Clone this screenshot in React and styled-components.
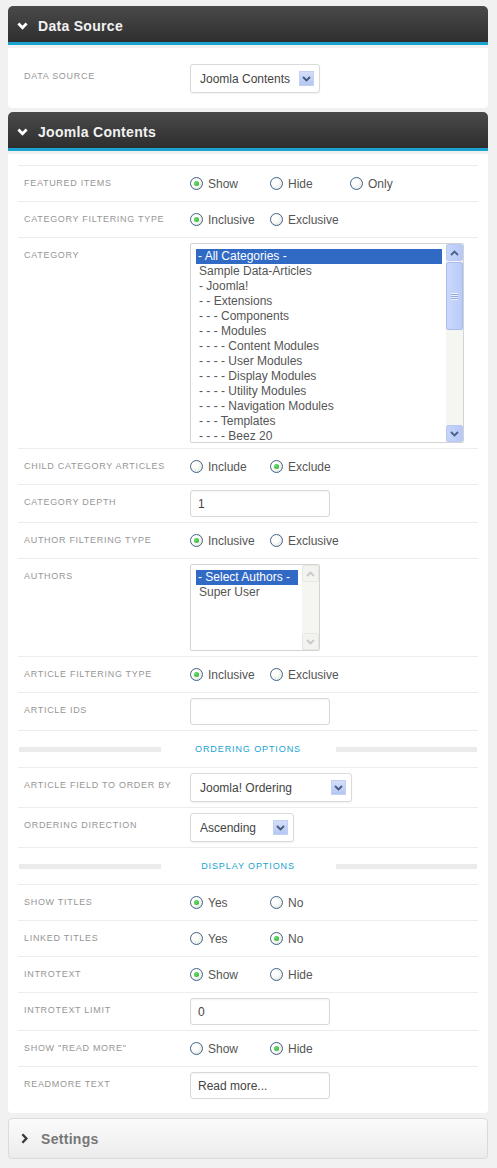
import React from 'react';
import styled, { createGlobalStyle } from 'styled-components';

const GlobalStyle = createGlobalStyle`
  body {
    margin: 0;
    background: #f1f1f1;
    font-family: "Liberation Sans", Arial, sans-serif;
  }
`;

const categories = [
    '- All Categories -',
    'Sample Data-Articles',
    '- Joomla!',
    '- - Extensions',
    '- - - Components',
    '- - - Modules',
    '- - - - Content Modules',
    '- - - - User Modules',
    '- - - - Display Modules',
    '- - - - Utility Modules',
    '- - - - Navigation Modules',
    '- - - Templates',
    '- - - - Beez 20',
];

const ChevronDown = ({ color = '#fff' }) => (
    <svg width="11" height="8" viewBox="0 0 11 8">
        <path d="M1.4 1.6 L5.5 5.8 L9.6 1.6" fill="none" stroke={color} strokeWidth="2.8" />
    </svg>
);

const ChevronRight = () => (
    <svg width="7" height="11" viewBox="0 0 7 11">
        <path d="M1.4 1.2 L5.4 5.5 L1.4 9.8" fill="none" stroke="#3a3a3a" strokeWidth="2.4" />
    </svg>
);

const SmallArrow = ({ up, color }) => (
    <svg width="9" height="6" viewBox="0 0 9 6">
        <path d={up ? 'M1 5 L4.5 1.5 L8 5' : 'M1 1 L4.5 4.5 L8 1'} fill="none" stroke={color} strokeWidth="1.8" />
    </svg>
);

const Radio = ({ checked, label }) => (
    <RadioItem>
        <RadioDot $checked={checked} />
        {label}
    </RadioItem>
);

const Select = ({ value, width }) => (
    <SelectBox $width={width}>
        <span>{value}</span>
        <SelectArrow><SmallArrow color="#44577d" /></SelectArrow>
    </SelectBox>
);

const ListBox = ({ items, width, height, disabled }) => (
    <List $width={width} $height={height}>
        <Options>
            {items.map((item, i) => (
                <Option key={item} $selected={i === 0}>{item}</Option>
            ))}
        </Options>
        <Scrollbar>
            <ScrollButton $disabled={disabled}><SmallArrow up color={disabled ? '#c9c9c9' : '#4d6185'} /></ScrollButton>
            <Track>
                {!disabled && (
                    <Thumb>
                        <Grip />
                    </Thumb>
                )}
            </Track>
            <ScrollButton $disabled={disabled}><SmallArrow color={disabled ? '#c9c9c9' : '#4d6185'} /></ScrollButton>
        </Scrollbar>
    </List>
);

const Field = ({ label, children }) => (
    <Row>
        <Label>{label}</Label>
        <Control>{children}</Control>
    </Row>
);

const Section = ({ title }) => (
    <SectionRow>
        <Bar />
        <SectionTitle>{title}</SectionTitle>
        <Bar />
    </SectionRow>
);

const App = () => {
    return <Page>
        <GlobalStyle />
        <Panel>
            <Header>
                <ChevronDown />
                Data Source
            </Header>
            <Body $bottom={10}>
                <Row $plain>
                    <Label>Data Source</Label>
                    <Control><Select value="Joomla Contents" width={130} /></Control>
                </Row>
            </Body>
        </Panel>

        <Panel>
            <Header>
                <ChevronDown />
                Joomla Contents
            </Header>
            <Body $bottom={9}>
                <Field label="Featured Items">
                    <Radio checked label="Show" />
                    <Radio label="Hide" />
                    <Radio label="Only" />
                </Field>
                <Field label="Category Filtering Type">
                    <Radio checked label="Inclusive" />
                    <Radio label="Exclusive" />
                </Field>
                <Field label="Category">
                    <ListBox items={categories} width={274} height={200} />
                </Field>
                <Field label="Child Category Articles">
                    <Radio label="Include" />
                    <Radio checked label="Exclude" />
                </Field>
                <Field label="Category Depth">
                    <TextInput>1</TextInput>
                </Field>
                <Field label="Author Filtering Type">
                    <Radio checked label="Inclusive" />
                    <Radio label="Exclusive" />
                </Field>
                <Field label="Authors">
                    <ListBox items={['- Select Authors -', 'Super User']} width={130} height={87} disabled />
                </Field>
                <Field label="Article Filtering Type">
                    <Radio checked label="Inclusive" />
                    <Radio label="Exclusive" />
                </Field>
                <Field label="Article IDs">
                    <TextInput />
                </Field>

                <Section title="Ordering Options" />

                <Field label="Article Field to Order By">
                    <Select value="Joomla! Ordering" width={162} />
                </Field>
                <Field label="Ordering Direction">
                    <Select value="Ascending" width={104} />
                </Field>

                <Section title="Display Options" />

                <Field label="Show Titles">
                    <Radio checked label="Yes" />
                    <Radio label="No" />
                </Field>
                <Field label="Linked Titles">
                    <Radio label="Yes" />
                    <Radio checked label="No" />
                </Field>
                <Field label="Introtext">
                    <Radio checked label="Show" />
                    <Radio label="Hide" />
                </Field>
                <Field label="Introtext Limit">
                    <TextInput>0</TextInput>
                </Field>
                <Field label={'Show "Read More"'}>
                    <Radio label="Show" />
                    <Radio checked label="Hide" />
                </Field>
                <Field label="Readmore Text">
                    <TextInput>Read more...</TextInput>
                </Field>
            </Body>
        </Panel>

        <SettingsHeader>
            <ChevronRight />
            Settings
        </SettingsHeader>
    </Page>
}

export default App;

const Page = styled.div`
    padding: 6px 9px 0 8px;
`;

const Panel = styled.div`
    margin-bottom: 4px;

    & + & {
        margin-bottom: 5px;
    }
`;

const Header = styled.div`
    height: 36px;
    box-sizing: border-box;
    display: flex;
    align-items: center;
    gap: 10px;
    padding: 3px 0 0 9px;
    border-radius: 5px 5px 0 0;
    border-bottom: 3px solid #18a3d1;
    background: linear-gradient(#4a4a4a, #2e2e2e);
    color: #f2f2f2;
    font-size: 14px;
    font-weight: 700;
    letter-spacing: 0.3px;
    height: 39px;

    svg {
        margin-top: 1px;
    }
`;

const Body = styled.div`
    margin-top: 3px;
    padding: 11px 10px ${p => p.$bottom}px;
    background: #fff;
    border-radius: 0 0 4px 4px;
`;

const Row = styled.div`
    display: flex;
    align-items: flex-start;
    padding: 5px 6px;
    border-top: ${p => p.$plain ? 'none' : '1px solid #ededed'};
`;

const Label = styled.div`
    width: 166px;
    flex: none;
    font-size: 9px;
    line-height: 25px;
    letter-spacing: 0.7px;
    text-transform: uppercase;
    color: #969696;
`;

const Control = styled.div`
    flex: 1;
    min-height: 25px;
    display: flex;
    align-items: center;
`;

const RadioItem = styled.label`
    min-width: 80px;
    display: inline-flex;
    align-items: center;
    gap: 5px;
    font-size: 12px;
    color: #555;
`;

const RadioDot = styled.span`
    position: relative;
    width: 11px;
    height: 11px;
    border-radius: 50%;
    border: 1px solid #3f6385;
    background: radial-gradient(circle at 35% 35%, #fff 30%, #dcdcd6 100%);

    &::after {
        content: '';
        display: ${p => p.$checked ? 'block' : 'none'};
        position: absolute;
        left: 3px;
        top: 3px;
        width: 5px;
        height: 5px;
        border-radius: 50%;
        background: radial-gradient(circle at 40% 40%, #6fe06f, #1fa51f);
    }
`;

const SelectBox = styled.div`
    box-sizing: border-box;
    width: ${p => p.$width}px;
    height: 29px;
    display: flex;
    align-items: center;
    justify-content: space-between;
    padding: 0 5px 0 9px;
    background: #fff;
    border: 1px solid #dadada;
    border-radius: 3px;
    box-shadow: 0 1px 2px rgba(0, 0, 0, 0.06);
    font-size: 12px;
    color: #444;
`;

const SelectArrow = styled.span`
    width: 15px;
    height: 15px;
    display: flex;
    align-items: center;
    justify-content: center;
    background: linear-gradient(#d3def9, #b4c7f3);
    border: 1px solid #c2d1f2;
    box-sizing: border-box;
`;

const TextInput = styled.div`
    box-sizing: border-box;
    width: 140px;
    height: 27px;
    padding: 0 7px;
    display: flex;
    align-items: center;
    background: #fff;
    border: 1px solid #d8d8d8;
    border-radius: 3px;
    box-shadow: inset 0 1px 2px rgba(0, 0, 0, 0.05);
    font-size: 12px;
    color: #444;
`;

const List = styled.div`
    box-sizing: border-box;
    width: ${p => p.$width}px;
    height: ${p => p.$height}px;
    display: flex;
    border: 1px solid #d3d3d3;
    border-radius: 2px;
    background: #fff;
    overflow: hidden;
`;

const Options = styled.div`
    flex: 1;
    padding: 5px 4px 0 5px;
    overflow: hidden;
`;

const Option = styled.div`
    height: 15px;
    line-height: 15px;
    padding-left: ${p => p.$selected ? '2px' : '3px'};
    font-size: 12px;
    white-space: nowrap;
    background: ${p => p.$selected ? '#316ac5' : 'transparent'};
    color: ${p => p.$selected ? '#fff' : '#555'};
`;

const Scrollbar = styled.div`
    width: 17px;
    flex: none;
    display: flex;
    flex-direction: column;
    background: #f5f5f1;
`;

const ScrollButton = styled.div`
    height: 17px;
    flex: none;
    box-sizing: border-box;
    display: flex;
    align-items: center;
    justify-content: center;
    border: 1px solid ${p => p.$disabled ? '#e6e6e3' : '#b9c9f0'};
    border-radius: 2px;
    background: ${p => p.$disabled ? '#f3f3ef' : 'linear-gradient(90deg, #c6d4fb, #b7c9f7)'};
`;

const Track = styled.div`
    flex: 1;
    padding: 1px 0;
`;

const Thumb = styled.div`
    height: 68px;
    box-sizing: border-box;
    display: flex;
    align-items: center;
    justify-content: center;
    border: 1px solid #a9bde9;
    border-radius: 2px;
    background: linear-gradient(90deg, #cbd8fc, #b8cbf8);
`;

const Grip = styled.div`
    width: 7px;
    height: 7px;
    background: repeating-linear-gradient(#eef2fe 0 1px, #8fa8e0 1px 2px);
`;

const SectionRow = styled.div`
    height: 36px;
    display: flex;
    align-items: center;
    padding: 0 1px;
    border-top: 1px solid #ededed;
`;

const Bar = styled.div`
    flex: 1;
    height: 5px;
    background: #ebebeb;
`;

const SectionTitle = styled.div`
    width: 175px;
    text-align: center;
    font-size: 9px;
    letter-spacing: 0.9px;
    text-transform: uppercase;
    color: #18a3d1;
`;

const SettingsHeader = styled.div`
    height: 39px;
    display: flex;
    align-items: center;
    gap: 13px;
    padding-left: 12px;
    border: 1px solid #dadada;
    border-radius: 4px;
    background: linear-gradient(#fbfbfb, #ececec);
    font-size: 14px;
    font-weight: 700;
    letter-spacing: 0.3px;
    color: #777;
`;
